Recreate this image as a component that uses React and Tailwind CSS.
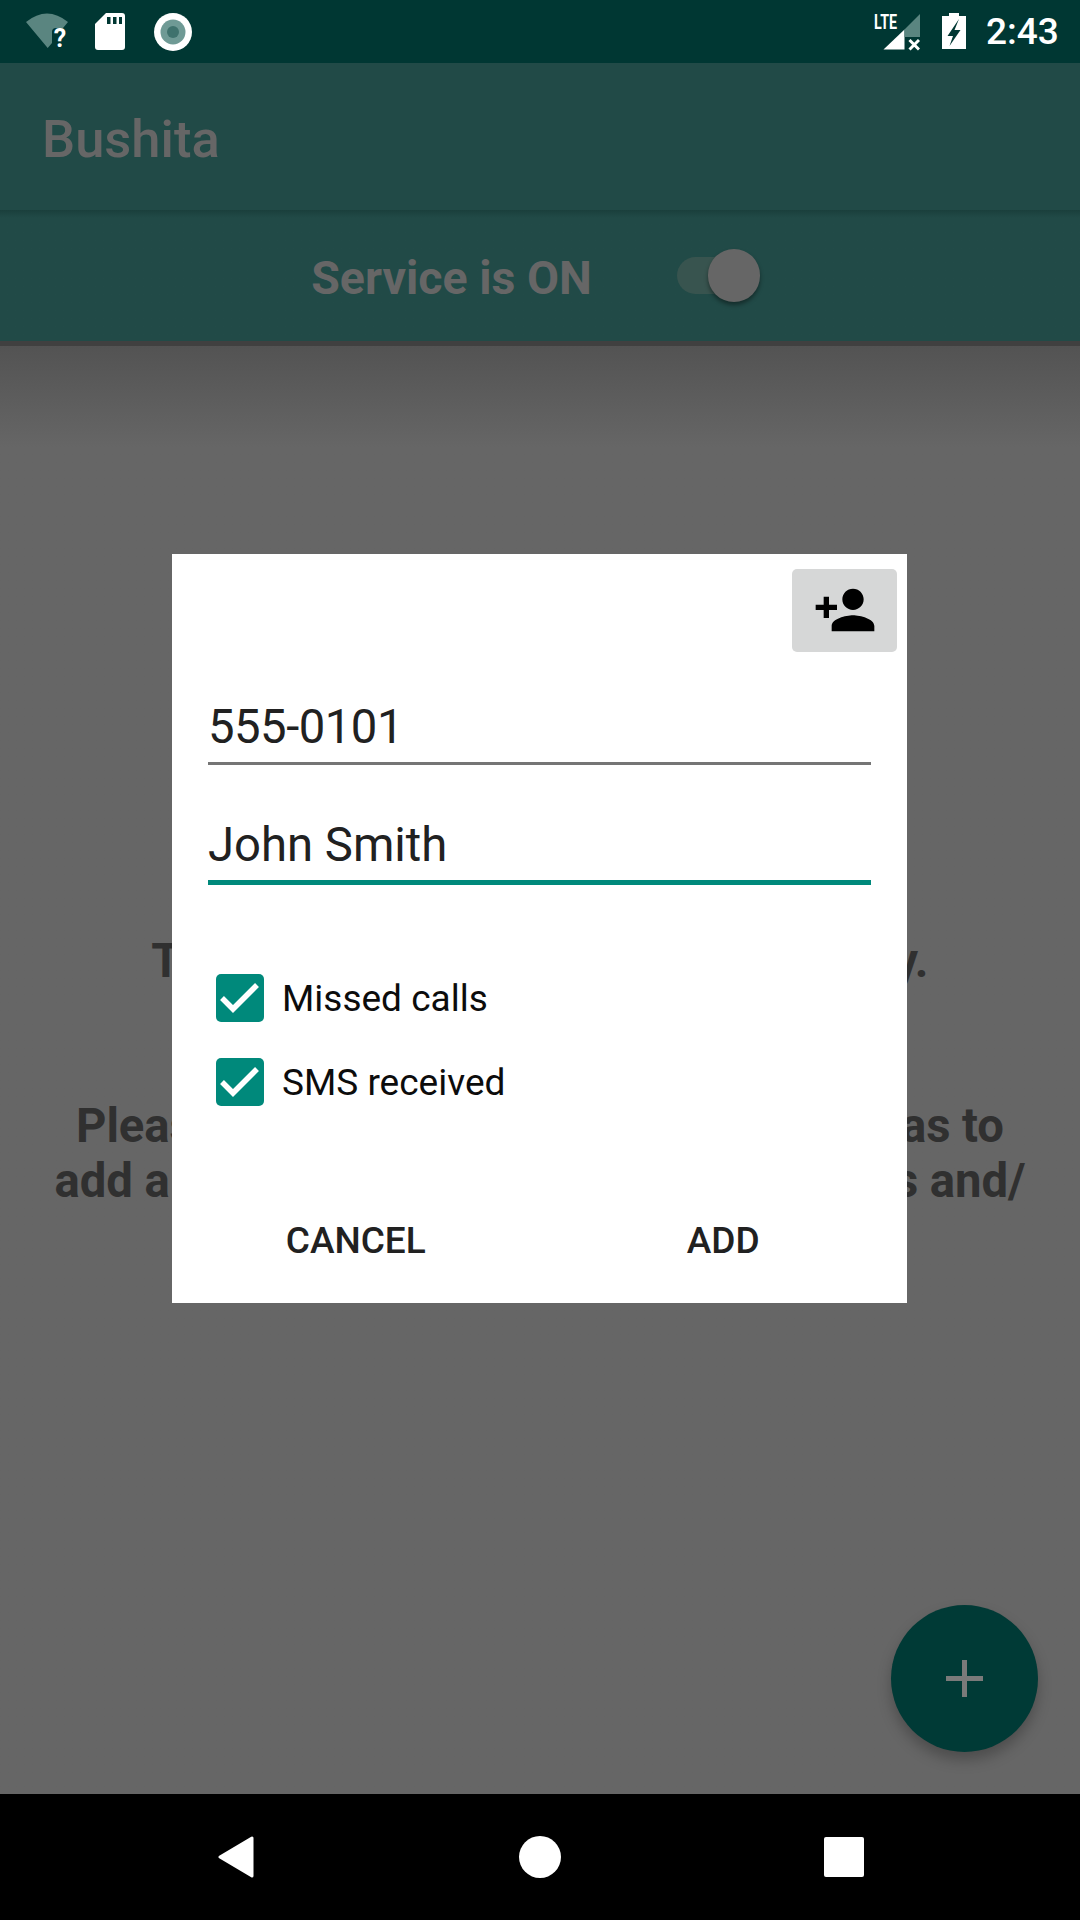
const roboto = { fontFamily: 'Roboto, "Liberation Sans", sans-serif' };

function Check() {
  return (
    <div className="w-[48px] h-[48px] rounded-[5px] bg-[#00897b] shrink-0">
      <svg width="48" height="48" viewBox="0 0 48 48" fill="none">
        <path d="M6 24L17 35L41 11" stroke="#fff" strokeWidth="5.5" />
      </svg>
    </div>
  );
}

function CheckRow({ label }) {
  return (
    <div className="flex items-center h-[48px] ml-[44px] gap-[18px]">
      <Check />
      <span className="text-[37px] leading-[48px] text-[#0c0c0c] mt-[2px]">{label}</span>
    </div>
  );
}

export default function App() {
  return (
    <div className="relative w-[1080px] h-[1920px] flex flex-col overflow-hidden bg-[#666666] font-normal" style={roboto}>
      {/* status bar */}
      <div className="h-[63px] bg-[#003733] flex items-center justify-between pl-[26px] pr-[23px] shrink-0">
        <div className="flex items-center">
          <svg width="42" height="63" viewBox="26 0 42 63">
            <path d="M26 22Q47 5 68 22L63 28H56Q52 28 52 32V43L47.7 48Z" fill="#5a8580" />
            <text x="60" y="47" textAnchor="middle" fontSize="25" fontWeight="700" fill="#fff">?</text>
          </svg>
          <svg className="ml-[27px]" width="30" height="63" viewBox="95 0 30 63">
            <path d="M106 13H122Q125 13 125 16V47Q125 50 122 50H98Q95 50 95 47V24Z" fill="#fff" />
            <path d="M107 17H110.5V24H107ZM113 17H116.5V24H113ZM119 17H122V24H119Z" fill="#003733" />
          </svg>
          <svg className="ml-[29px]" width="38" height="38" viewBox="0 0 38 38">
            <circle cx="19" cy="19" r="19" fill="#fff" />
            <circle cx="19" cy="19" r="12.5" fill="#6f9a95" />
            <circle cx="19" cy="19" r="6" fill="#3f726d" />
          </svg>
        </div>
        <div className="flex items-center">
          <svg width="46" height="63" viewBox="875 0 46 63">
            <text x="875" y="29" fontSize="21" fontWeight="700" fill="#fff" textLength="23" lengthAdjust="spacingAndGlyphs">LTE</text>
            <path d="M884.5 49.5L905.5 29.5V49.5Z" fill="#fff" />
            <path d="M905.5 29.5L921 14V37H905.5Z" fill="#5a8580" />
            <path d="M910.5 40L920 49.5M920 40L910.5 49.5" stroke="#fff" strokeWidth="3" />
          </svg>
          <svg className="ml-[22px]" width="24" height="63" viewBox="943 0 24 63">
            <path d="M950 13H960V16H967V49H943V16H950Z" fill="#fff" />
            <path d="M960 19L948.5 36H954L950.5 46L961.5 30H955.5Z" fill="#003733" />
          </svg>
          <span className="ml-[20px] text-[37px] font-medium leading-[63px] text-white w-[71px] whitespace-nowrap">2:43</span>
        </div>
      </div>

      {/* toolbar */}
      <div className="h-[147px] bg-[#214a47] flex items-center pl-[42px] shrink-0">
        <span className="text-[52.5px] font-medium text-[#666666] mt-[5px]">Bushita</span>
      </div>

      {/* service bar */}
      <div className="h-[131px] flex items-center justify-center shrink-0 bg-linear-to-b from-[#1a3f3c] to-[#214a47] to-[6%]">
        <span className="text-[46.5px] font-bold text-[#666666] mt-[6px]">Service is ON</span>
        <div className="relative w-[83px] h-[53px] ml-[85px] mr-[9px]">
          <div className="absolute left-0 top-[8px] w-[70px] h-[37px] rounded-full bg-[#38544f]" />
          <div className="absolute right-0 top-0 w-[52px] h-[53px] rounded-full bg-[#666666] shadow-[0_3px_4px_rgba(0,0,0,0.4)]" />
        </div>
      </div>
      <div className="h-[5px] bg-[#404040] shrink-0" />

      {/* page content */}
      <div className="relative flex-1 flex flex-col items-center bg-linear-to-b from-[#535353] to-[#666666] to-[7%] pt-[588px] text-[47.25px] leading-[55px] font-bold text-[#303030] whitespace-nowrap">
        <p className="tracking-[0.2px]">This contacts list is currently empty.</p>
        <p className="mt-[110px] tracking-[-0.08px]">Please tap the + button down below so as to</p>
        <p className="tracking-[-0.05px]">add a new contact who will get your calls and/</p>
        <p>or SMS</p>
      </div>

      {/* nav bar */}
      <div className="h-[126px] bg-black flex items-start justify-between pt-[42px] pl-[218px] pr-[216px] shrink-0">
        <svg width="36" height="42" viewBox="0 0 36 42">
          <path d="M34 2V40L2 21Z" fill="#fff" stroke="#fff" strokeWidth="3" strokeLinejoin="round" />
        </svg>
        <div className="w-[42px] h-[42px] rounded-full bg-white ml-[2px]" />
        <div className="w-[40px] h-[40px] rounded-[2px] bg-white mt-[1px]" />
      </div>

      {/* floating action button */}
      <div className="absolute left-[891px] top-[1605px] w-[147px] h-[147px] rounded-full bg-[#003a36] shadow-[0_8px_14px_rgba(0,0,0,0.25)] flex items-center justify-center">
        <svg width="37" height="37" viewBox="0 0 37 37">
          <path d="M16 0H21V16H37V21H21V37H16V21H0V16H16Z" fill="#7a7a7a" />
        </svg>
      </div>

      {/* dialog */}
      <div className="absolute left-[172px] top-[554px] w-[735px] h-[749px] bg-white flex flex-col">
        <div className="self-end mt-[15px] mr-[10px] w-[105px] h-[83px] rounded-[5px] bg-[#d6d7d7] flex items-center justify-center">
          <svg className="mt-[-2px]" width="64" height="64" viewBox="0 0 24 24" fill="#000">
            <path d="M15 12c2.21 0 4-1.79 4-4s-1.79-4-4-4-4 1.79-4 4 1.79 4 4 4zm-9-2V7H4v3H1v2h3v3h2v-3h3v-2H6zm9 4c-2.67 0-8 1.34-8 4v2h16v-2c0-2.66-5.33-4-8-4z" />
          </svg>
        </div>
        <div className="mx-[36px] mt-[47px] pb-[7px] border-b-[3px] border-[#757575] text-[47.25px] leading-[56px] text-[#212121] tracking-[-0.5px]">555-0101</div>
        <div className="mx-[36px] mt-[52px] pb-[7px] border-b-[5px] border-[#00897b] text-[47.25px] leading-[56px] text-[#212121]">John Smith</div>
        <div className="mt-[89px] flex flex-col gap-[36px]">
          <CheckRow label="Missed calls" />
          <CheckRow label="SMS received" />
        </div>
        <div className="mt-auto h-[126px] flex text-[37px] font-medium text-[#212121]">
          <div className="flex-1 flex items-center justify-center pt-[2px]">CANCEL</div>
          <div className="flex-1 flex items-center justify-center pt-[2px]">ADD</div>
        </div>
      </div>
    </div>
  );
}
